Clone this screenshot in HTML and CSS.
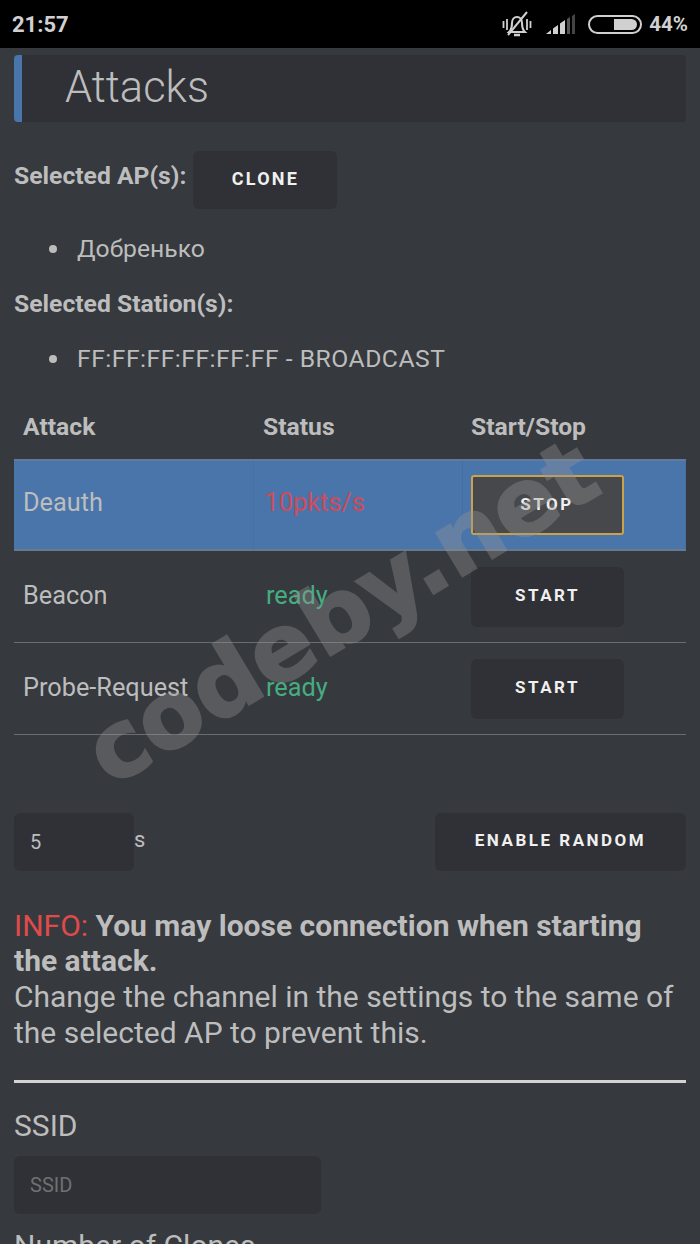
FILE: index.html

```html
<!DOCTYPE html>
<html lang="en">
<head>
  <meta charset="UTF-8" />
  <meta name="viewport" content="width=device-width, initial-scale=1.0" />
  <title>Attacks</title>
  <link rel="stylesheet" href="styles.css">
</head>
<body>
  <div class="status-bar">
    <span class="clock">21:57</span>
    <div class="status-icons">
      <svg class="icon-bell" width="30" height="26" viewBox="0 0 30 26" fill="none" stroke="#d0d0d0" stroke-width="2">
        <path d="M8 20c1.500-2 2-4 2-8 0-3.500 2-6 5-6s5 2.500 5 6c0 4 .5 6 2 8l1 1H7z"/>
        <path d="M12 24h6" stroke-width="2.500"/>
        <path d="M6 24L25 1"/>
        <path d="M1.500 10v7M5 8v11M25 8v11M28.500 10v7" stroke-width="1.800"/>
      </svg>
      <svg width="32" height="24" viewBox="0 0 32 24" class="icon-signal">
        <path d="M1 22l5-4v4z" fill="#d0d0d0"/>
        <path d="M8 16.500l5-3.500v9H8z" fill="#d0d0d0"/>
        <path d="M15 11.500l5-3.500v14h-5z" fill="#d0d0d0"/>
        <path d="M22 7l3-2v17h-3z" fill="#555"/>
        <path d="M27 4l3-2v20h-3z" fill="#444"/>
      </svg>
      <div class="battery"><div class="battery-fill"></div></div>
      <span class="percent">44%</span>
    </div>
  </div>

  <div class="page">
    <h1 class="page-title">Attacks</h1>

    <div class="selected-row">
      <b>Selected AP(s):</b>
      <button class="btn btn-clone">CLONE</button>
    </div>
    <ul class="selected-list">
      <li>Добренько</li>
    </ul>

    <b class="selected-label">Selected Station(s):</b>
    <ul class="selected-list">
      <li class="station">FF:FF:FF:FF:FF:FF - BROADCAST</li>
    </ul>

    <table class="attack-table">
      <thead>
        <tr>
          <th class="col-name">Attack</th>
          <th class="col-status">Status</th>
          <th class="col-action">Start/Stop</th>
        </tr>
      </thead>
      <tbody>
        <tr class="selected">
          <td>Deauth</td>
          <td class="status-run">10pkts/s</td>
          <td class="cell-action"><button class="btn btn-table btn-stop">STOP</button></td>
        </tr>
        <tr>
          <td>Beacon</td>
          <td class="status-ready">ready</td>
          <td class="cell-action"><button class="btn btn-table">START</button></td>
        </tr>
        <tr>
          <td>Probe-Request</td>
          <td class="status-ready">ready</td>
          <td class="cell-action"><button class="btn btn-table">START</button></td>
        </tr>
      </tbody>
    </table>

    <div class="random-row">
      <input class="field field-interval" type="text" value="5" aria-label="Interval">
      <span class="unit">s</span>
      <button class="btn btn-random">ENABLE RANDOM</button>
    </div>

    <p class="info">
      <span class="info-tag">INFO:</span> <b>You may loose connection when starting the attack.</b><br>
      Change the channel in the settings to the same of the selected AP to prevent this.
    </p>

    <hr class="divider">

    <label class="field-label">SSID</label>
    <input class="field field-ssid" type="text" placeholder="SSID" aria-label="SSID">
    <label class="field-label field-label-clones">Number of Clones</label>
  </div>

  <div class="watermark">codeby.net</div>
</body>
</html>
```

FILE: styles.css

```css
* {
  box-sizing: border-box;
}
body, html {
  margin: 0;
  padding: 0;
  height: 1244px;
  overflow: hidden;
  background-color: #36393e;
  color: #bdbdbd;
  font-family: Roboto, 'Noto Sans', sans-serif;
  font-size: 24.700px;
}
body {
  position: relative;
}
.status-bar {
  display: flex;
  align-items: center;
  justify-content: space-between;
  height: 48px;
  padding: 0 12px;
  background-color: #000;
  color: #d0d0d0;
  font-weight: 700;
}
.clock {
  font-size: 22px;
}
.status-icons {
  display: flex;
  align-items: center;
}
.icon-bell {
  margin-right: 13px;
}
.icon-signal {
  margin-right: 11px;
}
.battery {
  display: flex;
  justify-content: flex-end;
  width: 54px;
  height: 19px;
  padding: 2px 3px;
  border: 2px solid #d0d0d0;
  border-radius: 10px;
}
.battery-fill {
  width: 23px;
  height: 100%;
  background-color: #d0d0d0;
  border-radius: 0 6px 6px 0;
}
.percent {
  margin-left: 7px;
  font-size: 20.500px;
}
.page {
  padding: 7px 14px 0;
}
.page-title {
  margin: 0;
  height: 67px;
  padding-left: 43px;
  background-color: #2f3136;
  border-left: 8px solid #4a75ab;
  border-radius: 4px;
  font-size: 43.500px;
  line-height: 66px;
  font-weight: 300;
}
.selected-row {
  display: flex;
  align-items: flex-start;
  gap: 7px;
  margin-top: 29px;
}
.selected-row b {
  line-height: 50px;
}
.selected-label {
  display: block;
  margin-top: 22px;
  line-height: 30px;
}
.selected-list {
  margin: 22px 0 0;
  padding-left: 63px;
  line-height: 36px;
  list-style: none;
}
.selected-list li {
  position: relative;
}
/* bullet sits further out than the default marker */
.selected-list li::before {
  content: "";
  position: absolute;
  left: -28px;
  top: 14px;
  width: 8px;
  height: 8px;
  border-radius: 50%;
  background-color: #bdbdbd;
}
.station {
  letter-spacing: 0.500px;
}
.btn {
  background-color: #2f3136;
  color: #f0f0f0;
  border: none;
  border-radius: 6px;
  font-family: Roboto, sans-serif;
  font-size: 18px;
  font-weight: 700;
  letter-spacing: 2.200px;
  padding: 0 0 3px;
}
.btn-clone {
  width: 144px;
  height: 58px;
}
.attack-table {
  width: 100%;
  margin-top: 17px;
  border-collapse: collapse;
  table-layout: fixed;
}
.attack-table th {
  height: 66px;
  padding: 0 0 0 9px;
  text-align: left;
  font-weight: 700;
}
.attack-table .col-name {
  width: 239px;
}
.attack-table .col-status {
  width: 209px;
  padding-left: 10px;
}
.attack-table td {
  height: 92px;
  padding: 0 0 2px 10px;
  border-bottom: 1.500px solid #6a6d70;
  font-size: 25.300px;
}
.attack-table td:first-child {
  padding-left: 9px;
}
.attack-table td:nth-child(2) {
  padding-left: 13px;
}
.attack-table .cell-action {
  padding: 1px 0 0 9px;
}
.selected td {
  height: 90px;
  background-color: #4a75ab;
  border-top: 2px solid #5e7a9e;
  border-bottom: 2px solid #667a8c;
  border-right: 1px solid #4570a5;
}
.attack-table .selected td {
  padding-bottom: 5px;
}
.attack-table .selected .status-run {
  padding-left: 11px;
}
.attack-table .selected .cell-action {
  padding: 0 0 0 8px;
}
.status-run {
  color: #d14a58;
}
.status-ready {
  color: #45ad80;
}
.btn-table {
  display: block;
  width: 153px;
  height: 60px;
  font-size: 17px;
  letter-spacing: 2.500px;
}
.btn-stop {
  background-color: #46484c;
  border: 2px solid #c9a24a;
  border-radius: 3px;
}
.random-row {
  display: flex;
  align-items: flex-start;
  margin-top: 78px;
}
.field {
  background-color: #2f3136;
  border: none;
  border-radius: 6px;
  color: #bdbdbd;
  font-family: Roboto, sans-serif;
  font-size: 20px;
  padding: 0 16px;
}
.field-interval {
  width: 120px;
  height: 58px;
}
.field::placeholder {
  color: #6f7073;
}
.unit {
  margin-top: 14px;
  font-size: 22px;
}
.btn-random {
  width: 251px;
  height: 58px;
  margin-left: auto;
  font-size: 17px;
  letter-spacing: 2.500px;
}
.info {
  margin: 37px 0 0;
  font-size: 30px;
  line-height: 35.800px;
}
.info-tag {
  color: #e04a4a;
}
.divider {
  margin: 29px 0 0;
  height: 3px;
  border: none;
  background-color: #d4d4d4;
}
.field-label {
  display: block;
  margin-top: 25px;
  font-size: 30px;
  line-height: 36px;
}
.field-ssid {
  display: block;
  width: 307px;
  height: 58px;
  margin-top: 12px;
}
.field-label-clones {
  margin-top: 14px;
}
.watermark {
  position: absolute;
  left: 53px;
  top: 558px;
  transform: rotate(-31deg);
  font-family: 'DejaVu Sans', sans-serif;
  font-size: 93px;
  font-weight: 700;
  color: #969696;
  -webkit-text-stroke: 2px #969696;
  opacity: 0.36;
  white-space: nowrap;
}
```
